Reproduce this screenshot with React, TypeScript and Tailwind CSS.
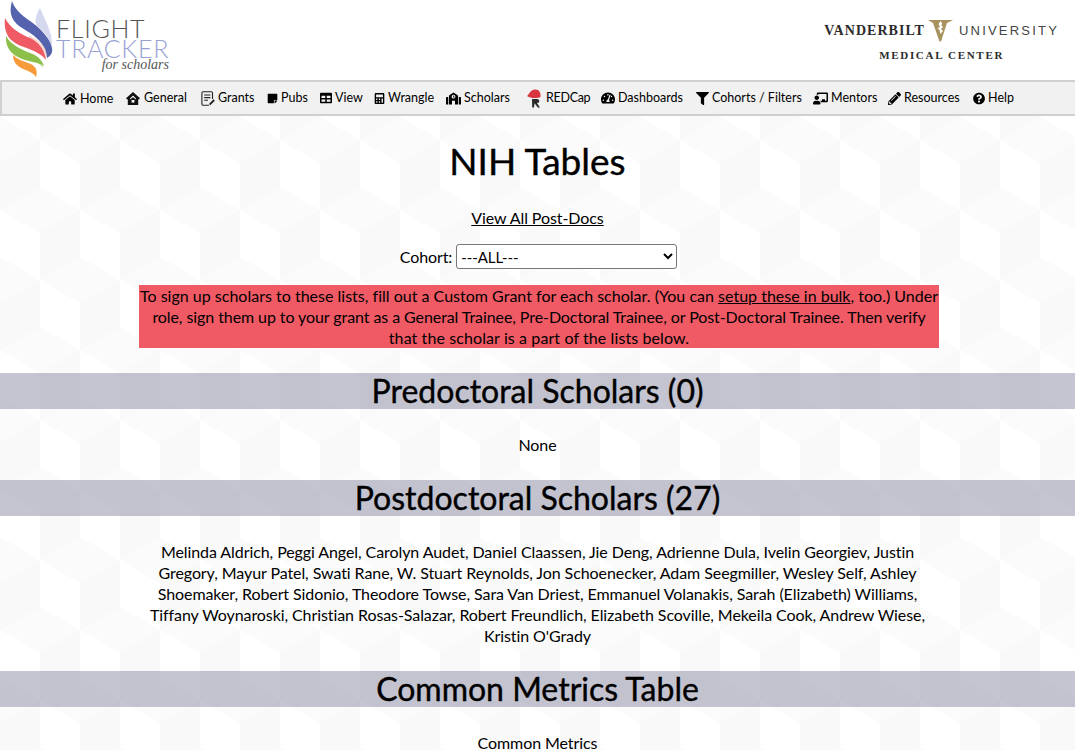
import {
  FaHome,
  FaStickyNote,
  FaTable,
  FaCalculator,
  FaSchool,
  FaTachometerAlt,
  FaFilter,
  FaChalkboardTeacher,
  FaPencilAlt,
  FaQuestionCircle,
} from "react-icons/fa";
import type { ReactNode } from "react";

const font = { fontFamily: "Lato, 'Open Sans', sans-serif" };

const RedcapIcon = () => (
  <svg width="17" height="20" viewBox="0 0 17 20" className="shrink-0">
    <path d="M1 8 C3 7.5 3.5 2 8.5 1.5 C13 1 15 4.5 14.5 9 C11 10.5 5 10.5 1 8 Z" fill="#d8353f" />
    <path d="M6 11 H11 C14 11 14 15 11 15 L14 19.5 H11.8 L8.6 15.3 L8 19.5 H6.2 Z" fill="#2a2a2a" />
  </svg>
);

const GeneralIcon = () => (
  <svg width="14" height="13" viewBox="0 0 14 13" className="shrink-0">
    <path d="M7 0 L14 6.2 L12.8 7.4 L12.2 7 V13 H1.8 V7 L1.2 7.4 L0 6.2 Z" fill="#111111" />
    <path d="M7 3.6 L10 6.4 V7.6 L7 5.2 L4 7.6 V6.4 Z" fill="#ffffff" />
    <rect x="5.6" y="8" width="2.8" height="2.6" fill="#ffffff" />
  </svg>
);

const GrantsIcon = () => (
  <svg width="14" height="15" viewBox="0 0 14 15" className="shrink-0" fill="none" stroke="#222222">
    <path d="M11.5 8 V2 C11.5 1.2 11 0.8 10.4 0.8 H2 C1.4 0.8 0.9 1.2 0.9 2 V13 C0.9 13.7 1.4 14.2 2 14.2 H8" strokeWidth="1.1" />
    <path d="M3.2 4 H9.4 M3.2 6.6 H9.4 M3.2 9.2 H7" strokeWidth="1.1" />
    <path d="M8.6 13.6 L13.2 9" strokeWidth="1.8" />
  </svg>
);

const navItems: { label: ReactNode; icon: ReactNode; className: string }[] = [
  { label: "Home", icon: <FaHome size={14} />, className: "w-[63px] translate-y-[1px]" },
  { label: "General", icon: <GeneralIcon />, className: "w-[75px] gap-[4px]" },
  { label: "Grants", icon: <GrantsIcon />, className: "w-[66px] gap-[3px]" },
  { label: "Pubs", icon: <FaStickyNote size={11} />, className: "w-[53px] gap-[3px]" },
  { label: "View", icon: <FaTable size={12} />, className: "w-[54px] gap-[3px]" },
  { label: "Wrangle", icon: <FaCalculator size={11} />, className: "w-[72px] gap-[3px]" },
  { label: "Scholars", icon: <FaSchool size={15} />, className: "w-[80px] gap-[3px]" },
  { label: "REDCap", icon: <RedcapIcon />, className: "w-[75px] gap-[1px] tracking-[-0.3px]" },
  { label: "Dashboards", icon: <FaTachometerAlt size={14} />, className: "w-[95px] gap-[3px]" },
  { label: "Cohorts / Filters", icon: <FaFilter size={13} />, className: "w-[117px] gap-[2px]" },
  { label: "Mentors", icon: <FaChalkboardTeacher size={15} />, className: "w-[75px] gap-[2px]" },
  { label: "Resources", icon: <FaPencilAlt size={13} />, className: "w-[85px] gap-[3px]" },
  { label: "Help", icon: <FaQuestionCircle size={13} />, className: "w-[41px] gap-[3px]" },
];

const FlameLogo = () => (
  <svg width="56" height="80" viewBox="0 0 56 80" className="shrink-0">
    <path d="M40 8 C36 14 35 20 36 25 C42 30 50 38 52 47 C53 33 45 20 40 8 Z" fill="#d5d8ee" />
    <path d="M29 36 C38 39 45 45 48 55 L45 60 C42 51 36 46 29 41 Z" fill="#f8d9d2" />
    <path d="M26 53 C34 54 41 58 44 66 L42 68 C38 62 32 58 26 56 Z" fill="#e4ecd2" />
    <path d="M12 1 C14 8 20 14 30 21 C40 28 50 38 52 48 C53 54 50 56 47 58 C47 50 43 43 33 35 C25 29 13 25 11 14 C10 9 11 5 12 1 Z" fill="#5562ae" />
    <path d="M5 18 C10 28 20 34 30 38 C38 42 44 48 46 60 C43 55 35 51 24 47 C13 43 3 37 5 18 Z" fill="#ef5a64" />
    <path d="M6 36 C10 44 20 49 30 53 C36 55 41 58 44 66 C38 62 30 62 22 59 C12 55 5 48 6 36 Z" fill="#8cc04b" />
    <path d="M13 55 C18 60 26 62 31 64 C36 67 38 71 36 77 C33 72 27 71 21 68 C16 65 13 61 13 55 Z" fill="#f79a3a" />
  </svg>
);

const VShield = () => (
  <svg width="25" height="22" viewBox="0 0 25 22" className="shrink-0">
    <path d="M0 0 H25 L19 3 L13 21.5 H11.5 L5 3 Z" fill="#a8935f" />
    <path d="M12.5 1 L14.5 4 L13 5 L15 7 L13 9 L15 11 L12.5 14 L11.5 10 L9.5 8 L12 7 L10.5 4 Z" fill="#ffffff" />
  </svg>
);

const Bar = ({ children }: { children: ReactNode }) => (
  <h2 className="flex h-9 items-center justify-center bg-[#8b8ba3]/50 text-[32px] leading-9 tracking-normal text-black [-webkit-text-stroke:0.4px_black]">
    {children}
  </h2>
);

export default function App() {
  return (
    <div className="relative h-[750px] overflow-hidden bg-white text-black" style={font}>
      <svg className="absolute inset-0 h-full w-full" aria-hidden="true">
        <defs>
          <pattern id="cubes" width="80" height="140" patternUnits="userSpaceOnUse">
            <rect width="80" height="140" fill="#ffffff" />
            {/* top faces */}
            <path d="M40 47 L80 70 L40 93 L0 70 Z" fill="#fbfbfb" />
            <path d="M0 117 L40 140 L0 163 Z" fill="#fbfbfb" />
            <path d="M80 117 L40 140 L80 163 Z" fill="#fbfbfb" />
            <path d="M0 -23 L40 0 L0 23 Z" fill="#fbfbfb" />
            <path d="M80 -23 L40 0 L80 23 Z" fill="#fbfbfb" />
            {/* right faces */}
            <path d="M0 23 L40 0 L40 47 L0 70 Z" fill="#f9f9f9" />
            <path d="M40 93 L80 70 L80 117 L40 140 Z" fill="#f9f9f9" />
          </pattern>
        </defs>
        <rect width="100%" height="100%" fill="url(#cubes)" />
      </svg>

      <div className="relative">
        <header className="flex h-20 items-start justify-between bg-white">
          <div className="flex">
            <FlameLogo />
            <div className="flex flex-col pt-[18px]">
              <span className="text-[25px] font-light leading-[20px] tracking-[0.7px] text-[#555555]">FLIGHT</span>
              <span className="text-[25px] font-light leading-[20px] tracking-[0.7px] text-[#98a1d4]">TRACKER</span>
              <span
                className="mt-[-1px] text-right text-[14px] italic leading-[16px] text-[#555555]"
                style={{ fontFamily: "'Liberation Serif', serif" }}
              >
                for scholars
              </span>
            </div>
          </div>
          <div className="mr-[16px] flex flex-col items-center pt-[20px]">
            <div className="flex items-start gap-[6px]">
              <span
                className="mr-[-3px] mt-[3px] text-[14px] font-bold leading-[16px] tracking-[1.05px] text-[#2b2b2b]"
                style={{ fontFamily: "'Liberation Serif', serif" }}
              >
                VANDERBILT
              </span>
              <VShield />
              <span
                className="mt-[3px] text-[13px] leading-[16px] tracking-[2.2px] text-[#444444]"
                style={{ fontFamily: "'Liberation Sans', sans-serif" }}
              >
                UNIVERSITY
              </span>
            </div>
            <span
              className="mt-[7px] text-[11px] font-bold leading-[13px] tracking-[1.7px] text-[#2b2b2b]"
              style={{ fontFamily: "'Liberation Serif', serif" }}
            >
              MEDICAL CENTER
            </span>
          </div>
        </header>

        <nav className="flex h-9 items-center justify-start border-y-2 border-l-2 border-[#cfcfcf] bg-[#f1f1f1] pl-[61px] text-[12.5px] text-black">
          {navItems.map((item, i) => (
            <div key={i} className={`flex shrink-0 items-center gap-[3px] ${item.className}`}>
              {item.icon}
              <span className="whitespace-nowrap">{item.label}</span>
            </div>
          ))}
        </nav>

        <main className="text-center text-[16px] leading-[21px] tracking-[-0.08px]">
          <h1 className="pt-[23px] text-[37px] leading-[44px] tracking-normal [-webkit-text-stroke:0.4px_black]">NIH Tables</h1>
          <p className="mt-[24px]">
            <a className="underline">View All Post-Docs</a>
          </p>
          <div className="mt-[16px] flex items-center justify-center gap-[4px] pl-[2px]">
            <label>Cohort:</label>
            <select className="h-[25px] w-[221px] rounded-[3px] border border-[#767676] bg-white text-[15px] leading-[21px]">
              <option>---ALL---</option>
            </select>
          </div>
          <div className="ml-[139px] mt-[16px] w-[800px] whitespace-nowrap bg-[#f05a65] leading-[21px]">
            <span className="tracking-[0.01px]">
              To sign up scholars to these lists, fill out a Custom Grant for each scholar. (You can{" "}
              <a className="underline">setup these in bulk</a>, too.) Under
            </span>
            <br />
            role, sign them up to your grant as a General Trainee, Pre-Doctoral Trainee, or Post-Doctoral Trainee. Then verify
            <br />
            <span className="tracking-[0.1px]">that the scholar is a part of the lists below.</span>
          </div>

          <div className="mt-[25px]">
            <Bar>Predoctoral Scholars (0)</Bar>
          </div>
          <p className="mt-[25px]">None</p>
          <div className="mt-[25px]">
            <Bar>Postdoctoral Scholars (27)</Bar>
          </div>
          <p className="mx-auto mt-[25px] w-[800px]">
            Melinda Aldrich, Peggi Angel, Carolyn Audet, Daniel Claassen, Jie Deng, Adrienne Dula, Ivelin Georgiev, Justin
            <br />
            Gregory, Mayur Patel, Swati Rane, W. Stuart Reynolds, Jon Schoenecker, Adam Seegmiller, Wesley Self, Ashley
            <br />
            Shoemaker, Robert Sidonio, Theodore Towse, Sara Van Driest, Emmanuel Volanakis, Sarah (Elizabeth) Williams,
            <br />
            Tiffany Woynaroski, Christian Rosas-Salazar, Robert Freundlich, Elizabeth Scoville, Mekeila Cook, Andrew Wiese,
            <br />
            Kristin O'Grady
          </p>
          <div className="mt-[25px]">
            <Bar>Common Metrics Table</Bar>
          </div>
          <p className="mt-[25px]">Common Metrics</p>
        </main>
      </div>
    </div>
  );
}
